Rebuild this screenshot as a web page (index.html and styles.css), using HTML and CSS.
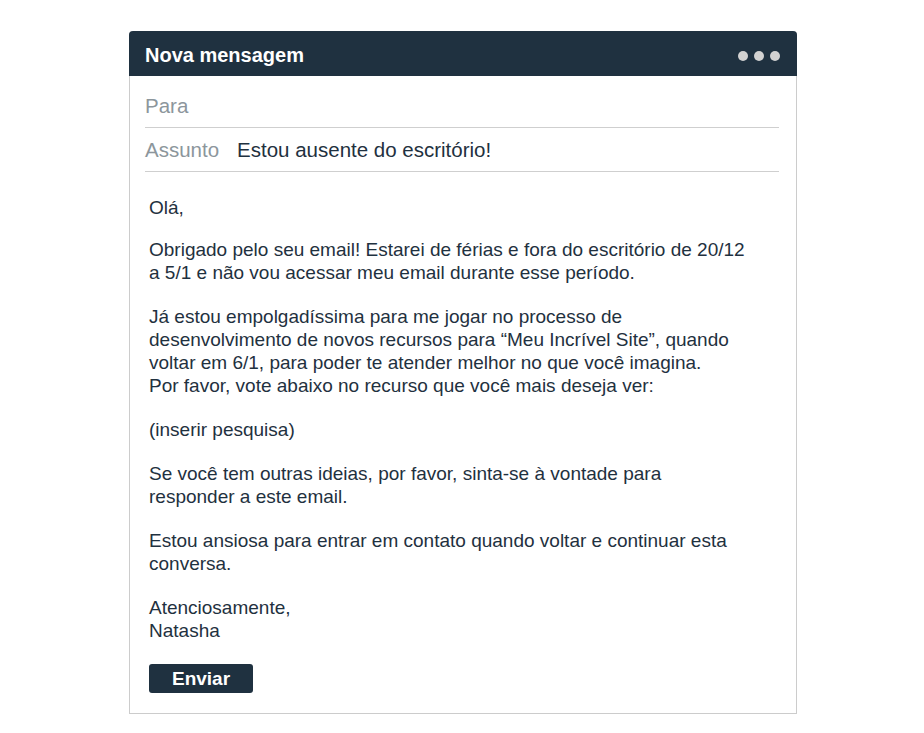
FILE: index.html
```html
<!DOCTYPE html>
<html lang="pt">
<head>
<meta charset="utf-8">
<title>Nova mensagem</title>
<link rel="stylesheet" href="styles.css">
</head>
<body>
<div class="card">
  <div class="header">
    <span class="title">Nova mensagem</span>
    <span class="dots"><i></i><i></i><i></i></span>
  </div>
  <div class="fields">
    <div class="field field-to"><span class="label">Para</span></div>
    <div class="field"><span class="label">Assunto</span><span class="value">Estou ausente do escritório!</span></div>
  </div>
  <div class="body">
    <p>Olá,</p>
    <p>Obrigado pelo seu email! Estarei de férias e fora do escritório de 20/12<br>a 5/1 e não vou acessar meu email durante esse período.</p>
    <p>Já estou empolgadíssima para me jogar no processo de<br>desenvolvimento de novos recursos para “Meu Incrível Site”, quando<br>voltar em 6/1, para poder te atender melhor no que você imagina.<br>Por favor, vote abaixo no recurso que você mais deseja ver:</p>
    <p>(inserir pesquisa)</p>
    <p>Se você tem outras ideias, por favor, sinta-se à vontade para<br>responder a este email.</p>
    <p>Estou ansiosa para entrar em contato quando voltar e continuar esta<br>conversa.</p>
    <p>Atenciosamente,<br>Natasha</p>
    <button class="send">Enviar</button>
  </div>
</div>
</body>
</html>
```
FILE: styles.css
```css
html, body {
  margin: 0;
  padding: 0;
  background: #ffffff;
  font-family: "Liberation Sans", Arial, sans-serif;
}
.card {
  width: 666px;
  margin: 31px 0 0 129px;
  border: 1px solid #cccccc;
  border-top: none;
  border-radius: 4px 4px 0 0;
  box-sizing: content-box;
}
.header {
  height: 45px;
  box-sizing: border-box;
  background: #1f3140;
  border-radius: 4px 4px 0 0;
  margin: 0 -1px;
  display: flex;
  align-items: center;
  justify-content: space-between;
  padding: 4px 17px 0 16px;
}
.title {
  color: #ffffff;
  font-weight: bold;
  font-size: 20px;
}
.dots {
  display: flex;
  gap: 6px;
  margin-top: 1px;
}
.dots i {
  display: block;
  width: 10px;
  height: 10px;
  border-radius: 50%;
  background: #d2d2d2;
}
.fields {
  padding: 8px 17px 0 15px;
}
.field {
  height: 43px;
  border-bottom: 1px solid #cfcfcf;
  display: flex;
  align-items: center;
  font-size: 20.5px;
}
.label {
  color: #8c969c;
}
.value {
  color: #1f3140;
  margin-left: 18px;
}
.body {
  padding: 24px 20px 20px 19px;
  color: #1f3140;
  font-size: 19px;
  line-height: 23px;
}
.body p {
  margin: 0 0 21px 0;
}
.body p:first-child {
  margin-bottom: 19px;
}
.send {
  display: block;
  margin-top: 22px;
  width: 104px;
  height: 29px;
  border: none;
  border-radius: 3px;
  background: #1f3140;
  color: #ffffff;
  font-family: "Liberation Sans", Arial, sans-serif;
  font-weight: bold;
  font-size: 19px;
  padding: 0;
}
```
